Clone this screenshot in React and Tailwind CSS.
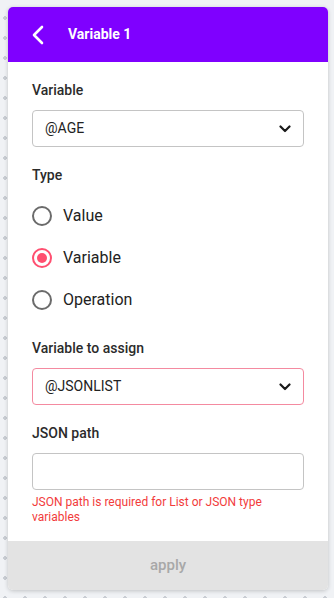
import React from "react";

function Chevron() {
  return (
    <svg width="12" height="8" viewBox="0 0 12 8" className="shrink-0">
      <path d="M1.5 1.5 L6 6 L10.5 1.5" fill="none" stroke="#1a1a1a" strokeWidth="2.2" strokeLinecap="round" strokeLinejoin="round" />
    </svg>
  );
}

function Radio({ label, checked }) {
  return (
    <div className="flex items-center h-[42px]">
      {checked ? (
        <span className="w-5 h-5 rounded-full border-2 border-[#ff4f70] flex items-center justify-center">
          <span className="w-[10px] h-[10px] rounded-full bg-[#ff4f70]" />
        </span>
      ) : (
        <span className="w-5 h-5 rounded-full border-2 border-[#6b6b6b]" />
      )}
      <span className="ml-[11px] text-[16px] text-[#222]">{label}</span>
    </div>
  );
}

export default function App() {
  return (
    <div
      className="w-[334px] h-[598px] overflow-hidden bg-[#f0f2f5] bg-[radial-gradient(circle,#c9cdd3_1.6px,transparent_1.8px)] bg-[size:20px_20px] bg-[position:-5px_8px] pt-[7px] pl-2"
      style={{ fontFamily: "Roboto, 'Liberation Sans', sans-serif" }}
    >
      <div className="w-[320px] h-[583px] bg-white rounded-[5px] shadow-[0_1px_4px_rgba(0,0,0,0.2)] flex flex-col overflow-hidden">
        <div className="h-[55px] bg-[#7f00ff] flex items-center shrink-0">
          <svg width="14" height="20" viewBox="0 0 14 20" className="ml-[23px]">
            <path d="M11 2 L3 10 L11 18" fill="none" stroke="white" strokeWidth="2.6" strokeLinecap="round" strokeLinejoin="round" />
          </svg>
          <span className="ml-[23px] text-white font-bold text-[14px]">Variable 1</span>
        </div>
        <div className="flex-1 px-6 pt-[18px] flex flex-col">
          <div className="text-[14px] leading-5 font-medium text-[#2b2b2b]">Variable</div>
          <div className="mt-[10px] h-[37px] border border-[#c4c4c4] rounded-[4px] flex items-center justify-between pl-3 pr-3">
            <span className="text-[14px] text-[#222]">@AGE</span>
            <Chevron />
          </div>
          <div className="mt-[18px] text-[14px] leading-5 font-medium text-[#2b2b2b]">Type</div>
          <div className="mt-[10px] flex flex-col">
            <Radio label="Value" />
            <Radio label="Variable" checked />
            <Radio label="Operation" />
          </div>
          <div className="mt-[17px] text-[14px] leading-5 font-medium text-[#2b2b2b]">Variable to assign</div>
          <div className="mt-[10px] h-[37px] border border-[#f48aa0] rounded-[4px] flex items-center justify-between pl-3 pr-3">
            <span className="text-[14px] text-[#222]">@JSONLIST</span>
            <Chevron />
          </div>
          <div className="mt-[18px] text-[14px] leading-5 font-medium text-[#2b2b2b]">JSON path</div>
          <div className="mt-[10px] h-[37px] border border-[#c4c4c4] rounded-[4px]" />
          <div className="mt-[5px] text-[12px] leading-[15px] text-[#f23b3b]">
            JSON path is required for List or JSON type variables
          </div>
        </div>
        <div className="h-[49px] shrink-0 bg-[#e3e3e3] flex items-center justify-center">
          <span className="text-[15px] font-medium text-[#a8a8a8]">apply</span>
        </div>
      </div>
    </div>
  );
}
